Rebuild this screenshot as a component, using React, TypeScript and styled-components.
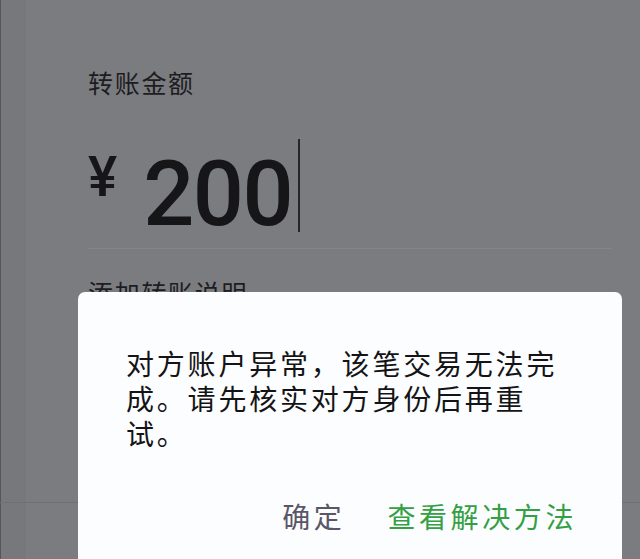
import React from 'react';
import styled, { createGlobalStyle } from 'styled-components';

const GlobalStyle = createGlobalStyle`
  html, body {
    margin: 0;
    padding: 0;
    width: 640px;
    height: 559px;
    overflow: hidden;
    background: #7b7c80;
  }
`

const Screen = styled.div`
  position: relative;
  width: 640px;
  height: 559px;
  overflow: hidden;
  display: flex;
  flex-direction: column;
  background: linear-gradient(to right, #55565a 0 1px, #77787c 1px 26px, #7b7c80 26px);
  font-family: "Noto Sans CJK SC", "Noto Sans", sans-serif;
`

const Content = styled.div`
  padding: 66px 28px 0 88px;
  display: flex;
  flex-direction: column;
`

const Label = styled.div`
  font-size: 25px;
  line-height: 33px;
  letter-spacing: 1.7px;
  color: #1d1d21;
`

const AmountRow = styled.div`
  margin-top: 40px;
  height: 93px;
  display: flex;
  align-items: flex-start;
`

const Yen = styled.span`
  font-family: Roboto, "Liberation Sans", sans-serif;
  font-weight: 500;
  font-size: 55px;
  line-height: 1;
  margin-top: 11px;
  color: #161619;
`

const Amount = styled.span`
  font-family: Roboto, "Liberation Sans", sans-serif;
  font-weight: 500;
  font-size: 90px;
  line-height: 1;
  letter-spacing: -1.5px;
  margin-top: 11px;
  margin-left: 26px;
  color: #161619;
`

const Caret = styled.span`
  width: 2px;
  height: 93px;
  margin-left: 6px;
  background: #25252b;
`

const Divider = styled.div`
  margin-top: 16px;
  height: 1px;
  background: #85868a;
`

const NoteLink = styled(Label)`
  margin-top: 27px;
`

const Spacer = styled.div`
  flex: 1;
`

const BottomBar = styled.div`
  height: 56px;
  border-top: 1px solid #6f7074;
`

const Dialog = styled.div`
  position: absolute;
  left: 78px;
  top: 292px;
  width: 544px;
  height: 320px;
  box-sizing: border-box;
  padding: 54px 45px 0 48px;
  border-radius: 7px;
  background: #fcfdff;
`

const Message = styled.p`
  margin: 0;
  width: 448px;
  font-size: 28px;
  line-height: 35px;
  letter-spacing: 2.8px;
  color: #141416;
`

const Actions = styled.div`
  margin-top: 48px;
  display: flex;
  justify-content: flex-end;
  gap: 42px;
`

const ActionButton = styled.button<{ primary?: boolean }>`
  border: 0;
  padding: 0;
  background: none;
  font-family: inherit;
  font-size: 28px;
  line-height: 35px;
  letter-spacing: 3.6px;
  color: ${props => (props.primary ? '#33a043' : '#5a5667')};
`

export default function App() {
  return (
    <Screen>
      <GlobalStyle />
      <Content>
        <Label>转账金额</Label>
        <AmountRow>
          <Yen>¥</Yen>
          <Amount>200</Amount>
          <Caret />
        </AmountRow>
        <Divider />
        <NoteLink>添加转账说明</NoteLink>
      </Content>
      <Spacer />
      <BottomBar />

      <Dialog>
        <Message>对方账户异常，该笔交易无法完成。请先核实对方身份后再重试。</Message>
        <Actions>
          <ActionButton>确定</ActionButton>
          <ActionButton primary>查看解决方法</ActionButton>
        </Actions>
      </Dialog>
    </Screen>
  );
}
